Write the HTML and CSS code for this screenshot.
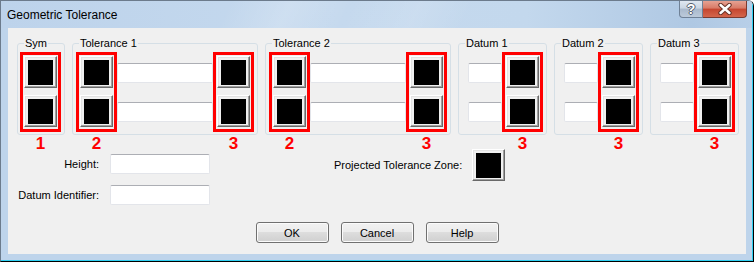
FILE: index.html
```html
<!DOCTYPE html>
<html>
<head>
    <title>Geometric Tolerance</title>
    <link rel="stylesheet" href="styles.css">
</head>
<body>
<div class="window">
  <div class="frame">
    <div class="titlebar">
        <span class="title">Geometric Tolerance</span>
        <div class="caption-buttons">
            <span class="cap-btn cap-help">?</span>
            <span class="cap-btn cap-close">
                <svg width="16" height="12" viewBox="0 0 16 12">
                    <path d="M3.5 2 L12.5 10 M12.5 2 L3.5 10" stroke="#6a3328" stroke-width="4.4" stroke-linecap="round" fill="none"/>
                    <path d="M3.5 2 L12.5 10 M12.5 2 L3.5 10" stroke="#ffffff" stroke-width="2.4" stroke-linecap="round" fill="none"/>
                </svg>
            </span>
        </div>
    </div>

    <div class="content">
        <div class="groups">
            <div class="group group-sym">
                <div class="group-title">Sym</div>
                <div class="group-body">
                    <div class="marked">
                        <div class="pick"><div class="pick-fill"></div></div>
                        <div class="pick"><div class="pick-fill"></div></div>
                        <span class="mark">1</span>
                    </div>
                </div>
            </div>

            <div class="group group-tol">
                <div class="group-title">Tolerance 1</div>
                <div class="group-body">
                    <div class="marked">
                        <div class="pick"><div class="pick-fill"></div></div>
                        <div class="pick"><div class="pick-fill"></div></div>
                        <span class="mark">2</span>
                    </div>
                    <div class="field-stack">
                        <div class="field"></div>
                        <div class="field"></div>
                    </div>
                    <div class="marked">
                        <div class="pick"><div class="pick-fill"></div></div>
                        <div class="pick"><div class="pick-fill"></div></div>
                        <span class="mark">3</span>
                    </div>
                </div>
            </div>

            <div class="group group-tol">
                <div class="group-title">Tolerance 2</div>
                <div class="group-body">
                    <div class="marked">
                        <div class="pick"><div class="pick-fill"></div></div>
                        <div class="pick"><div class="pick-fill"></div></div>
                        <span class="mark">2</span>
                    </div>
                    <div class="field-stack">
                        <div class="field"></div>
                        <div class="field"></div>
                    </div>
                    <div class="marked">
                        <div class="pick"><div class="pick-fill"></div></div>
                        <div class="pick"><div class="pick-fill"></div></div>
                        <span class="mark">3</span>
                    </div>
                </div>
            </div>

            <div class="group group-datum">
                <div class="group-title">Datum 1</div>
                <div class="group-body">
                    <div class="field-stack">
                        <div class="field"></div>
                        <div class="field"></div>
                    </div>
                    <div class="marked">
                        <div class="pick"><div class="pick-fill"></div></div>
                        <div class="pick"><div class="pick-fill"></div></div>
                        <span class="mark">3</span>
                    </div>
                </div>
            </div>

            <div class="group group-datum">
                <div class="group-title">Datum 2</div>
                <div class="group-body">
                    <div class="field-stack">
                        <div class="field"></div>
                        <div class="field"></div>
                    </div>
                    <div class="marked">
                        <div class="pick"><div class="pick-fill"></div></div>
                        <div class="pick"><div class="pick-fill"></div></div>
                        <span class="mark">3</span>
                    </div>
                </div>
            </div>

            <div class="group group-datum">
                <div class="group-title">Datum 3</div>
                <div class="group-body">
                    <div class="field-stack">
                        <div class="field"></div>
                        <div class="field"></div>
                    </div>
                    <div class="marked">
                        <div class="pick"><div class="pick-fill"></div></div>
                        <div class="pick"><div class="pick-fill"></div></div>
                        <span class="mark">3</span>
                    </div>
                </div>
            </div>
        </div>

        <div class="extras">
            <div class="fields">
                <label>Height:</label>
                <div class="field field-wide"></div>
                <label>Datum Identifier:</label>
                <div class="field field-wide"></div>
            </div>
            <div class="zone">
                <span class="zone-label">Projected Tolerance Zone:</span>
                <div class="pick"><div class="pick-fill"></div></div>
            </div>
        </div>

        <div class="actions">
            <button type="button">OK</button>
            <button type="button">Cancel</button>
            <button type="button">Help</button>
        </div>
    </div>
  </div>
</div>
</body>
</html>
```

FILE: styles.css
```css
* {
    box-sizing: border-box;
}

body {
    margin: 0;
    font-family: "Liberation Sans", Arial, sans-serif;
    font-size: 11px;
    color: #000;
    background: #fff;
}

.window {
    width: 754px;
    height: 262px;
    border-top: 1px solid #6c7b8c;
    border-left: 1px solid #6c7b8c;
    border-right: 1px solid #000;
    border-bottom: 1px solid #000;
    border-top-right-radius: 6px;
    overflow: hidden;
}

.frame {
    height: 100%;
    display: flex;
    flex-direction: column;
    background: #bed4eb;
    border-right: 1px solid #2fd0f2;
    border-bottom: 1px solid #2fd0f2;
}

/* title bar */
.titlebar {
    height: 27px;
    display: flex;
    align-items: center;
    padding-left: 6px;
    background:
        linear-gradient(115deg, transparent 30%, rgba(255,255,255,0.18) 38%, transparent 46%, rgba(255,255,255,0.12) 55%, transparent 62%),
        linear-gradient(to right, #bdd3eb 0%, #c5d9ee 45%, #c3d8ed 70%, #afc8e3 92%, #b8cfe8 100%);
}

.title {
    font-size: 12px;
    color: #000;
}

.caption-buttons {
    margin-left: auto;
    margin-right: 5px;
    align-self: flex-start;
    display: flex;
}

.cap-btn {
    height: 17px;
    display: flex;
    align-items: center;
    justify-content: center;
}

.cap-help {
    width: 24px;
    border: 1px solid #6f8196;
    border-top: none;
    border-radius: 0 0 0 4px;
    background: linear-gradient(#dfe7f0 0%, #c9d5e2 45%, #a9b9cc 50%, #bccada 100%);
    color: #fff;
    font-weight: bold;
    font-size: 14px;
    text-shadow: 1px 0 0 #55606e, -1px 0 0 #55606e, 0 1px 0 #55606e, 0 -1px 0 #55606e;
}

.cap-close {
    width: 44px;
    border: 1px solid #7a3a30;
    border-top: none;
    border-left: none;
    border-radius: 0 0 4px 0;
    background: linear-gradient(#e6a292 0%, #d87a66 45%, #c5462f 50%, #d4664c 100%);
}

/* client area */
.content {
    flex: 1;
    margin: 0 6px 6px 7px;
    background: #f0f0f0;
    padding-top: 15px;
}

.groups {
    display: flex;
    gap: 7px;
    padding-left: 9px;
}

.group {
    border: 1px solid #d5dfe6;
    border-radius: 3px;
    padding-bottom: 2px;
}

.group-sym {
    width: 48px;
}

.group-tol {
    width: 186px;
}

.group-datum {
    width: 89px;
}

.group-title {
    width: max-content;
    margin: -7px 0 2px 6px;
    padding: 0 1px;
    line-height: 13px;
    background: #f0f0f0;
}

.group-body {
    display: flex;
    align-items: center;
    padding: 0 3px;
}

.group-sym .group-body {
    padding: 0 3px 0 2px;
}

.group-datum .group-body {
    padding: 0 3px 0 9px;
}

.marked {
    position: relative;
    display: flex;
    flex-direction: column;
    gap: 7px;
    border: 3px solid #ff0000;
    padding: 1px 1px 2px 1px;
}

.mark {
    position: absolute;
    top: calc(100% + 6px);
    left: 0;
    right: 0;
    text-align: center;
    color: #ff0000;
    font-weight: bold;
    font-size: 17px;
    line-height: 17px;
}

.pick {
    width: 33px;
    height: 32px;
    padding: 3px 0 0 3px;
    border: 1px solid;
    border-color: #ffffff #696969 #696969 #ffffff;
    box-shadow: inset -1px -1px 0 #a0a0a0, inset 1px 1px 0 #e3e3e3;
    background: #f0f0f0;
}

.pick-fill {
    width: 25px;
    height: 25px;
    background: #000;
}

.field-stack {
    display: flex;
    flex-direction: column;
    gap: 19px;
    flex: 1;
}

.group-datum .field-stack {
    flex: none;
    width: 34px;
}

.field {
    height: 20px;
    background: #fff;
    border: 1px solid #e3e5ea;
    border-top-color: #acaeb4;
    border-radius: 2px;
}

/* lower part */
.extras {
    display: flex;
    align-items: flex-start;
    margin-top: 14px;
    padding-left: 9px;
}

.fields {
    display: grid;
    grid-template-columns: 82px 100px;
    column-gap: 11px;
    row-gap: 11px;
    margin-top: 5px;
}

.fields label {
    align-self: center;
    text-align: right;
    white-space: nowrap;
}

.field-wide {
    width: 100px;
}

.zone {
    display: flex;
    align-items: center;
    gap: 11px;
    margin-left: 124px;
}

.zone-label {
    width: 127px;
    text-align: right;
    white-space: nowrap;
}

.actions {
    display: flex;
    justify-content: center;
    gap: 12px;
    margin-top: 17px;
}

.actions button {
    width: 73px;
    height: 21px;
    padding: 0;
    font-family: "Liberation Sans", Arial, sans-serif;
    font-size: 11px;
    color: #000;
    border: 1px solid #707070;
    border-radius: 3px;
    box-shadow: inset 0 0 0 1px #fbfbfb;
    background: linear-gradient(#f2f2f2 0%, #ebebeb 50%, #dddddd 50%, #cfcfcf 100%);
}
```
